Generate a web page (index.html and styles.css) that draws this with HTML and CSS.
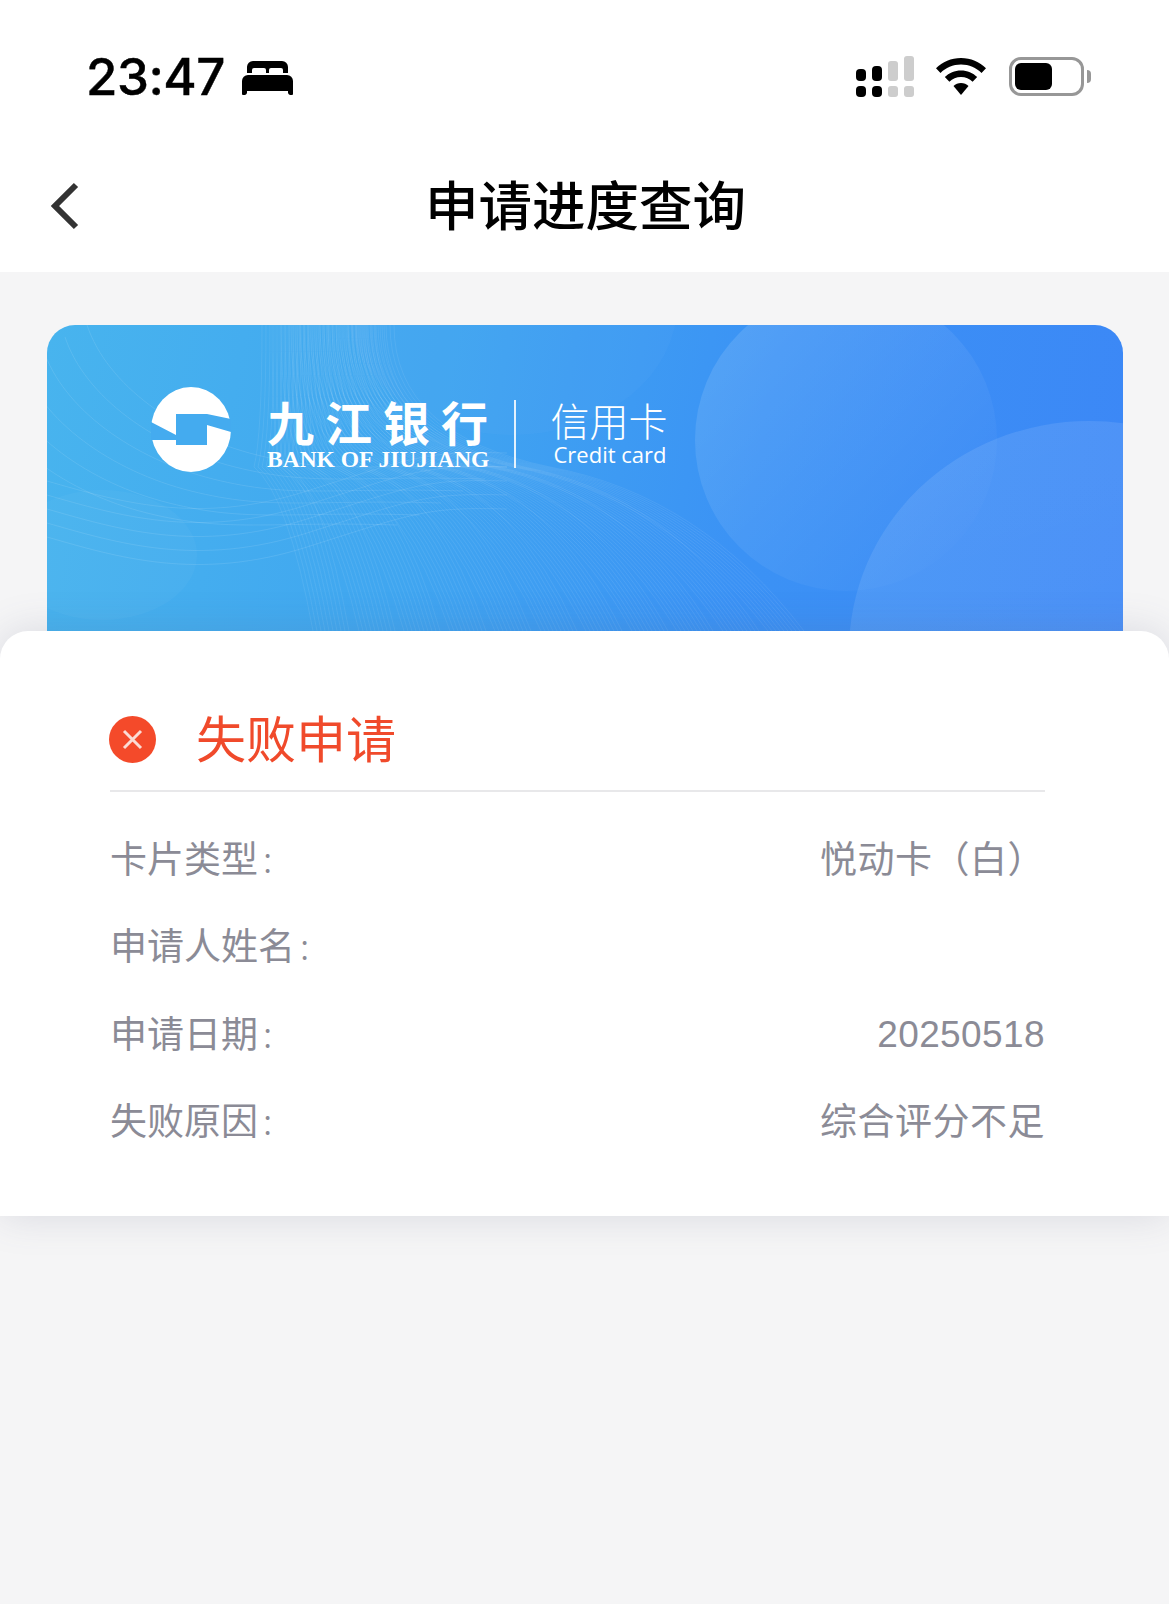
FILE: index.html
```html
<!DOCTYPE html>
<html lang="zh-CN">
<head>
<meta charset="utf-8">
<title>申请进度查询</title>
<link rel="stylesheet" href="styles.css">
</head>
<body>
<div class="app">
  <header class="top">
    <div class="status">
      <div class="status-left">
        <span class="clock">23:47</span>
        <svg class="bed" viewBox="0 0 51 34" aria-hidden="true"><path d="M5 12V6a6 6 0 0 1 6-6h29a6 6 0 0 1 6 6v6h-5V9a2 2 0 0 0-2-2H29a2 2 0 0 0-2 2v3h-3V9a2 2 0 0 0-2-2H12a2 2 0 0 0-2 2v3z"/><path d="M6 14h39a6 6 0 0 1 6 6v13a1 1 0 0 1-1 1h-2a3 3 0 0 1-2-2v-2H5v2a3 3 0 0 1-2 2H1a1 1 0 0 1-1-1V20a6 6 0 0 1 6-6z"/></svg>
      </div>
      <div class="status-right">
        <svg class="signal" viewBox="0 0 58 42" aria-hidden="true">
          <rect x="0" y="13" width="10" height="12" rx="4"/><rect x="0" y="30" width="10" height="11" rx="4"/>
          <rect x="16" y="10" width="10" height="15" rx="4"/><rect x="16" y="30" width="10" height="11" rx="4"/>
          <rect class="off" x="32" y="5" width="10" height="20" rx="3"/><rect class="off" x="32" y="30" width="10" height="11" rx="3"/>
          <rect class="off" x="48" y="0" width="10" height="25" rx="3"/><rect class="off" x="48" y="30" width="10" height="11" rx="3"/>
        </svg>
        <svg class="wifi" viewBox="0 0 50 37" aria-hidden="true"><path d="M25 0c9.800 0 18.600 3.900 25 10.300l-4.500 4.700C40.300 9.800 33 6.600 25 6.600S9.700 9.800 4.500 15L0 10.300C6.400 3.900 15.200 0 25 0z"/><path d="M25 12.500c6.300 0 12 2.500 16.200 6.600l-4.600 4.700c-3-3-7.100-4.800-11.600-4.800s-8.600 1.800-11.600 4.800l-4.600-4.700C13 15 18.700 12.500 25 12.500z"/><path d="M25 25c2.900 0 5.600 1.200 7.500 3L25 37l-7.500-9c1.900-1.800 4.600-3 7.500-3z"/></svg>
        <div class="battery"><span class="battery-level"></span></div>
        <span class="battery-nub"></span>
      </div>
    </div>
    <nav class="nav">
      <svg class="back" viewBox="0 0 30 48" aria-hidden="true"><path d="M26 3 5 24l21 21"/></svg>
      <h1 class="nav-title">申请进度查询</h1>
    </nav>
  </header>

  <main class="content">
    <section class="card">
      <span class="blob blob-top"></span>
      <span class="blob blob-left"></span>
      <span class="blob blob-one"></span>
      <span class="blob blob-two"></span>
      <svg class="waves" viewBox="0 0 1076 306" aria-hidden="true">
        <defs>
          <g id="fan">
            <path d="M215 0Q215 110 207 142Q241 170 266 306"/>
            <path d="M225 0Q225 110 233 142Q280 170 312 306"/>
            <path d="M234 0Q234 110 259 142Q318 170 357 306"/>
            <path d="M244 0Q244 110 285 142Q356 170 403 306"/>
            <path d="M253 0Q253 110 311 142Q395 170 448 306"/>
            <path d="M263 0Q263 110 337 142Q433 170 494 306"/>
            <path d="M273 0Q273 110 363 142Q471 170 539 306"/>
            <path d="M282 0Q282 110 389 142Q510 170 585 306"/>
            <path d="M292 0Q292 110 415 142Q548 170 630 306"/>
            <path d="M301 0Q301 110 441 142Q585 170 676 306"/>
            <path d="M311 0Q311 110 467 142Q617 170 721 306"/>
          </g>
          <path id="arc" d="M40 0C60 60 130 110 210 130S330 138 460 142"/>
          <path id="low" d="M0 170C70 190 150 215 260 180S380 140 460 142"/>
        </defs>
        <g class="fan-lines">
          <use href="#fan"/><use href="#fan" x="4"/><use href="#fan" x="8"/><use href="#fan" x="12"/><use href="#fan" x="16"/><use href="#fan" x="20"/><use href="#fan" x="24"/><use href="#fan" x="28"/><use href="#fan" x="32"/><use href="#fan" x="36"/>
        </g>
        <g class="arc-lines">
          <use href="#arc"/><use href="#arc" x="-22" y="12"/><use href="#arc" x="-44" y="24"/><use href="#arc" x="-66" y="36"/><use href="#arc" x="-88" y="48"/><use href="#arc" x="-110" y="58"/>
          <use href="#low"/><use href="#low" y="14"/><use href="#low" y="28"/><use href="#low" y="42"/><use href="#low" y="-14"/>
        </g>
      </svg>
      <div class="brand">
        <svg class="brand-mark" viewBox="0 0 80 85" aria-hidden="true">
          <ellipse cx="40" cy="42.500" rx="40" ry="42.500" fill="#fff"/>
          <path class="mark-cut" d="M25 27h31l26 5.500V45.500L56 38v20H25v-5H-2V34L25 48z"/>
        </svg>
        <div class="brand-name">
          <span class="brand-cn">九江银行</span>
          <span class="brand-en">BANK OF JIUJIANG</span>
        </div>
        <span class="brand-rule"></span>
        <div class="brand-type">
          <span class="type-cn">信用卡</span>
          <span class="type-en">Credit card</span>
        </div>
      </div>
    </section>

    <section class="sheet">
      <div class="result">
        <svg class="result-icon" viewBox="0 0 47 47" aria-hidden="true"><circle cx="23.500" cy="23.500" r="23.500"/><path d="m15 15 17 17M32 15 15 32"/></svg>
        <h2 class="result-title">失败申请</h2>
      </div>
      <dl class="details">
        <div class="row"><dt>卡片类型<span class="colon">:</span></dt><dd>悦动卡（白）</dd></div>
        <div class="row"><dt>申请人姓名<span class="colon">:</span></dt><dd></dd></div>
        <div class="row"><dt>申请日期<span class="colon">:</span></dt><dd class="num">20250518</dd></div>
        <div class="row"><dt>失败原因<span class="colon">:</span></dt><dd>综合评分不足</dd></div>
      </dl>
    </section>
  </main>
</div>
</body>
</html>
```
FILE: styles.css
```css
* { box-sizing: border-box; }
html, body { margin: 0; padding: 0; }
body {
  width: 1169px;
  height: 1604px;
  overflow: hidden;
  background: #f5f5f6;
  font-family: "Liberation Sans", "Noto Sans CJK SC", sans-serif;
}
.app { display: flex; flex-direction: column; height: 1604px; }

.top { background: #fff; height: 272px; display: flex; flex-direction: column; }
.status {
  height: 150px;
  padding: 56px 78px 0 86px;
  display: flex;
  justify-content: space-between;
  align-items: flex-start;
}
.status-left { display: flex; align-items: center; gap: 17px; height: 42px; }
.clock {
  font-family: Inter, "Liberation Sans", sans-serif;
  font-size: 51px;
  font-weight: 500;
  line-height: 42px;
  letter-spacing: -0.5px;
  color: #000;
  -webkit-text-stroke: 0.4px #000;
}
.bed { width: 51px; height: 34px; fill: #000; margin-top: 2px; }
.status-right { display: flex; align-items: flex-start; }
.signal { width: 58px; height: 42px; fill: #000; margin-right: 22px; }
.signal .off { fill: #cdcdcd; }
.wifi { width: 50px; height: 37px; fill: #000; margin: 2px 23px 0 0; }
.battery {
  width: 75px;
  height: 39px;
  margin-top: 1px;
  padding: 3px 0 0 3px;
  border: 3px solid #979797;
  border-radius: 12px;
}
.battery-level { display: block; width: 37px; height: 27px; background: #000; border-radius: 6px; }
.battery-nub {
  width: 4px;
  height: 13px;
  margin: 14px 0 0 3px;
  background: #979797;
  border-radius: 0 4px 4px 0;
}

.nav { flex: 1; position: relative; display: flex; align-items: flex-start; justify-content: center; }
.back {
  position: absolute;
  left: 50px;
  top: 32px;
  width: 30px;
  height: 48px;
  fill: none;
  stroke: #333;
  stroke-width: 6;
}
.nav-title {
  margin: 17px 0 0 2px;
  font-size: 53.500px;
  line-height: 72px;
  font-weight: 500;
  color: #000;
  font-family: "Noto Sans CJK SC", sans-serif;
}

.content { flex: 1; padding-top: 53px; display: flex; flex-direction: column; }
.card {
  position: relative;
  height: 306px;
  margin: 0 46px 0 47px;
  border-radius: 28px 28px 0 0;
  overflow: hidden;
  background: linear-gradient(100deg, #48b4ee 0%, #40a6f0 35%, #3b92f5 65%, #3c87f6 100%);
}
.blob { position: absolute; display: block; border-radius: 50%; }
.blob-top { left: 300px; top: -150px; width: 330px; height: 260px; background: rgba(100, 170, 245, .12); }
.blob-left { left: -40px; top: 165px; width: 190px; height: 130px; background: rgba(255, 255, 255, .03); }
.blob-one {
  left: 648px; top: -36px; width: 302px; height: 302px;
  background: linear-gradient(135deg, rgba(255, 255, 255, .14), rgba(255, 255, 255, .01) 85%);
}
.blob-two {
  left: 802px; top: 96px; width: 480px; height: 460px;
  background: linear-gradient(160deg, rgba(255, 255, 255, .1), rgba(255, 255, 255, .06));
}
.waves {
  position: absolute;
  inset: 0;
  width: 100%;
  height: 100%;
  fill: none;
  stroke: #fff;
  stroke-width: 1;
}
.fan-lines { stroke-opacity: .08; }
.arc-lines { stroke-opacity: .1; }
.brand {
  position: relative;
  display: flex;
  align-items: flex-start;
  padding: 62px 0 0 104px;
  color: #fff;
}
.brand-mark { width: 80px; height: 85px; flex: none; margin-right: 36px; overflow: hidden; }
.mark-cut { fill: #44abef; }
.brand-name { display: flex; flex-direction: column; width: 224px; margin-top: 8px; }
.brand-cn {
  font-family: "Noto Sans CJK SC", sans-serif;
  font-size: 47px;
  line-height: 52px;
  font-weight: 700;
  letter-spacing: 11px;
  white-space: nowrap;
}
.brand-en {
  font-family: "Liberation Serif", serif;
  font-weight: 700;
  font-size: 23.500px;
  line-height: 24px;
  white-space: nowrap;
}
.brand-rule { width: 1.500px; height: 68px; margin: 13px 35px 0 23px; background: rgba(255, 255, 255, .85); }
.brand-type { display: flex; flex-direction: column; margin-top: 10px; }
.type-cn {
  font-family: "Noto Sans CJK SC", sans-serif;
  font-size: 39px;
  line-height: 44px;
  white-space: nowrap;
  font-weight: 300;
}
.type-en {
  font-family: "Open Sans", sans-serif;
  font-size: 22px;
  line-height: 26px;
  margin-left: 3px;
  white-space: nowrap;
  font-weight: 400;
}

.sheet {
  position: relative;
  height: 585px;
  padding: 0 124px 0 110px;
  background: #fff;
  border-radius: 28px 28px 0 0;
  box-shadow: 0 0 40px rgba(90, 95, 125, .18);
}
.result {
  display: flex;
  align-items: center;
  height: 161px;
  padding-top: 56px;
  border-bottom: 2px solid #e8e8ea;
}
.result-icon { width: 47px; height: 47px; margin: 1px 0 0 -1px; flex: none; }
.result-icon circle { fill: #f44a2a; }
.result-icon path { fill: none; stroke: #fbdcd4; stroke-width: 3; }
.result-title {
  margin: -6px 0 0 40px;
  font-family: "Noto Sans CJK SC", sans-serif;
  font-size: 50px;
  font-weight: 400;
  line-height: 60px;
  color: #f04a2b;
}
.details { margin: 21px 0 0; color: #8b8b96; }
.row {
  display: flex;
  justify-content: space-between;
  align-items: center;
  height: 87.500px;
  font-family: "Noto Sans CJK SC", sans-serif;
  font-size: 37px;
}
.row dt, .row dd { margin: 0; white-space: nowrap; }
.row dd { letter-spacing: .5px; }
.colon { margin-left: 5px; font-weight: 300; }
.row .num { font-family: "Liberation Sans", sans-serif; padding-top: 6px; letter-spacing: .4px; }
```
